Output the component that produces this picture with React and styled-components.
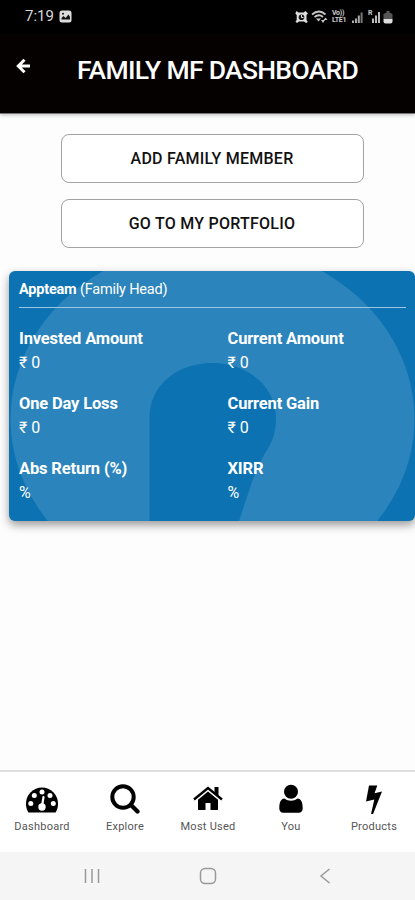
import React from 'react';
import styled, { createGlobalStyle } from 'styled-components';

const GlobalStyle = createGlobalStyle`
  * {
    box-sizing: border-box;
  }

  body {
    margin: 0;
    background: #fff;
    font-family: Roboto, 'Liberation Sans', sans-serif;
  }

  svg {
    display: block;
  }
`;

const Screen = styled.div`
  display: flex;
  flex-direction: column;
  width: 415px;
  height: 900px;
  background: #fdfdfd;
  overflow: hidden;
`;

const StatusBar = styled.div`
  display: flex;
  justify-content: space-between;
  align-items: center;
  height: 33px;
  padding: 0 30px 0 25px;
  background: #000;
  color: #d8d8d8;
`;

const Clock = styled.div`
  display: flex;
  align-items: center;
  gap: 5px;
  font-size: 15px;
  line-height: 33px;
`;

const Header = styled.header`
  display: flex;
  align-items: flex-start;
  height: 81px;
  padding: 22px 0 0 16px;
  background: #050100;
  border-bottom: 1px solid #777;
  box-shadow: 0 1px 4px rgba(0, 0, 0, 0.25);
  color: #fff;
`;

const BackButton = styled.div`
  width: 61px;
  padding-top: 3px;
`;

const Title = styled.h1`
  margin: 0;
  font-size: 26.5px;
  font-weight: 500;
  line-height: 30px;
  letter-spacing: -0.7px;
  white-space: nowrap;
`;

const Content = styled.main`
  flex: 1;
`;

const Actions = styled.div`
  display: flex;
  flex-direction: column;
  align-items: center;
  gap: 16px;
  padding: 20px 0 23px 9px;
`;

const ActionButton = styled.div`
  width: 303px;
  height: 49px;
  border: 1px solid #a2a2a2;
  border-radius: 8px;
  background: #fff;
  color: #111;
  font-size: 16px;
  font-weight: 500;
  line-height: 47px;
  text-align: center;
  letter-spacing: 0.25px;
`;

const Card = styled.section`
  position: relative;
  width: 406px;
  height: 250px;
  margin-left: 9px;
  padding: 0 9px 0 10px;
  border-radius: 6px;
  background: #0c72b2;
  box-shadow: 0 4px 10px rgba(0, 0, 0, 0.4);
  color: #fff;
  overflow: hidden;
`;

const Watermark = styled.svg`
  position: absolute;
  top: 0;
  left: 0;
`;

const CardBody = styled.div`
  position: relative;
`;

const Member = styled.div`
  height: 37px;
  border-bottom: 1px solid #9cc7e2;
  font-size: 14.5px;
  line-height: 37px;
  letter-spacing: -0.2px;

  b {
    font-weight: 700;
  }
`;

const Figures = styled.div`
  display: grid;
  grid-template-columns: 208.5px 1fr;
  grid-auto-rows: 65px;
  padding-top: 18px;
`;

const Label = styled.div`
  font-size: 16.5px;
  font-weight: 700;
  line-height: 25px;
  letter-spacing: -0.16px;
  white-space: nowrap;
`;

const Value = styled.div`
  font-size: 16px;
  line-height: 24px;
`;

const TabBar = styled.nav`
  display: grid;
  grid-template-columns: repeat(5, 83px);
  height: 82px;
  padding-left: 0.5px;
  border-top: 2px solid #dedede;
  background: #fff;
`;

const Tab = styled.div`
  display: flex;
  flex-direction: column;
  align-items: center;
  padding-top: 10px;
  color: #000;
`;

const TabLabel = styled.div`
  margin-top: 5px;
  color: #555;
  font-size: 11px;
  line-height: 16px;
  letter-spacing: 0.25px;
  white-space: nowrap;
`;

const SystemBar = styled.div`
  display: grid;
  grid-template-columns: 184px 48px 185px;
  align-items: center;
  height: 48px;
  background: #f5f5f5;

  svg {
    justify-self: center;
  }
`;

const figures = [
  { label: 'Invested Amount', value: '₹ 0' },
  { label: 'Current Amount', value: '₹ 0' },
  { label: 'One Day Loss', value: '₹ 0' },
  { label: 'Current Gain', value: '₹ 0' },
  { label: 'Abs Return (%)', value: '%' },
  { label: 'XIRR', value: '%' }
];

const DashboardIcon = () => (
  <svg width="34" height="32" viewBox="0 0 34 32">
    <path d="M3.500 30.500C2 28.300 1 25.500 1 22a16 16.500 0 0 1 32 0c0 3.500-1 6.300-2.500 8.500z" />
    <g fill="#fff">
      <circle cx="5.800" cy="21.500" r="2.500" />
      <circle cx="9.300" cy="13.500" r="2.500" />
      <circle cx="17" cy="10" r="2.500" />
      <circle cx="25" cy="13.500" r="2.500" />
      <circle cx="28.300" cy="21.500" r="2.500" />
      <circle cx="17" cy="25" r="3.700" />
    </g>
    <path d="M17.200 23l1.300-8" stroke="#fff" strokeWidth="2.200" strokeLinecap="round" />
  </svg>
);

const SearchIcon = () => (
  <svg width="34" height="32" viewBox="0 0 34 32" fill="none" stroke="#000">
    <circle cx="15" cy="15" r="10.700" strokeWidth="4" />
    <path d="M23 23l6.500 6.500" strokeWidth="4.300" strokeLinecap="round" />
  </svg>
);

const HomeIcon = () => (
  <svg width="34" height="32" viewBox="0 0 34 32">
    <path d="M3 17.500L17 6l14 11.500" fill="none" stroke="#000" strokeWidth="2.400" />
    <path d="M23.500 5h4v10l-4-3.500z" />
    <path d="M7 17.800L17 9.600l10 8.200V28h-7.500v-7h-5v7H7z" />
  </svg>
);

const UserIcon = () => (
  <svg width="34" height="32" viewBox="0 0 34 32">
    <path d="M10.500 16.500C6.800 17 5.300 20 5.300 26.500c0 2.500 1.500 4.200 4 4.200h15.400c2.500 0 4-1.700 4-4.200 0-6.500-1.500-9.500-5.200-10-2 1.600-4 2.200-6.500 2.200s-4.500-.6-6.500-2.200z" />
    <circle cx="17" cy="9.800" r="7" />
  </svg>
);

const BoltIcon = () => (
  <svg width="34" height="32" viewBox="0 0 34 32">
    <path d="M12 3.500h8.300l-2.800 7.700 7.500-1.700L16 32.200h-2L17.300 17.500 9 19.500z" />
  </svg>
);

const tabs = [
  { name: 'Dashboard', Icon: DashboardIcon },
  { name: 'Explore', Icon: SearchIcon },
  { name: 'Most Used', Icon: HomeIcon },
  { name: 'You', Icon: UserIcon },
  { name: 'Products', Icon: BoltIcon }
];

const GalleryIcon = () => (
  <svg width="13" height="13" viewBox="0 0 13 13">
    <rect x="0.500" y="0.500" width="12" height="12" rx="2.500" fill="#ddd" />
    <path d="M2.500 9.500V8l2-2 2 2 3-3.500L11 7v2.500z" fill="#111" />
    <circle cx="4" cy="3.700" r="1" fill="#111" />
  </svg>
);

const NetworkLabel = styled.div`
  display: flex;
  flex-direction: column;
  width: 15px;
  margin: 0 3px;
  color: #ccc;
  font-size: 7px;
  font-weight: 700;
  line-height: 7px;
  letter-spacing: -0.3px;
`;

const AlarmIcon = () => (
  <svg width="15" height="16" viewBox="0 0 15 16">
    <path
      d="M2.500 2l2 1.500h5L11.500 2 14 4.500 12.500 6v5l1.300 2-1.800 1-2-1.500H5L3 14l-1.500-1.500L2.700 11V6L1.300 4.500z"
      fill="#ddd"
    />
    <circle cx="7.500" cy="8.300" r="2.800" fill="#151515" />
    <path d="M7.500 6v2.500h2" stroke="#ddd" fill="none" />
  </svg>
);

const WifiIcon = () => (
  <svg width="17" height="16" viewBox="0 0 17 16" fill="#c8c8c8">
    <path d="M1 5.500q7-6 13.500 0M3.500 8q4.500-3.500 8.500 0" fill="none" stroke="#c8c8c8" strokeWidth="1.800" />
    <path d="M5 9.500h5L7.500 12.500z" />
    <path d="M10 11h4l-2 3zM12.500 11l2-2.500 2 2.500z" />
  </svg>
);

const SignalIcon = () => (
  <svg width="11" height="16" viewBox="0 0 11 16" fill="#aaa">
    <path d="M0 11.500h2V14H0zM3 9.500h2V14H3zM5.800 6.500h2V14h-2z" />
    <path d="M8.600 3.500h2V14h-2z" fill="#777" />
  </svg>
);

const RoamingSignal = styled.div`
  display: flex;
  align-items: flex-start;
  margin-left: 4px;
  color: #ccc;
  font-size: 7px;
  font-weight: 700;
  line-height: 8px;
`;

const BatteryIcon = () => (
  <svg width="10" height="16" viewBox="0 0 10 16">
    <path d="M3.500 2h3v1.500L9.500 5v5h-9V5l3-1.500z" fill="#555" />
    <path d="M.500 10h9v2.500q0 2-2 2h-5q-2 0-2-2z" fill="#ddd" />
  </svg>
);

const StatusRight = styled.div`
  display: flex;
  align-items: center;
  justify-content: space-between;
  width: 99px;
  margin-right: -8px;

  svg {
    flex: none;
  }
`;

const App = () => {
  return (
    <Screen>
      <GlobalStyle />
      <StatusBar>
        <Clock>
          7:19
          <GalleryIcon />
        </Clock>
        <StatusRight>
          <AlarmIcon />
          <WifiIcon />
          <NetworkLabel>
            <span>Vo))</span>
            <span>LTE1</span>
          </NetworkLabel>
          <SignalIcon />
          <RoamingSignal>
            R
            <svg width="9" height="16" viewBox="0 0 9 16" fill="#bbb">
              <path d="M0 9.500h2V14H0zM3 6.500h2V14H3zM6 3h2v11H6z" />
            </svg>
          </RoamingSignal>
          <BatteryIcon />
        </StatusRight>
      </StatusBar>
      <Header>
        <BackButton>
          <svg width="15" height="16" viewBox="0 0 15 16" fill="none" stroke="#fff" strokeWidth="3">
            <path d="M8.500 1.800L2.300 8l6.200 6.200M3 8h11" />
          </svg>
        </BackButton>
        <Title>FAMILY MF DASHBOARD</Title>
      </Header>
      <Content>
        <Actions>
          <ActionButton>ADD FAMILY MEMBER</ActionButton>
          <ActionButton>GO TO MY PORTFOLIO</ActionButton>
        </Actions>
        <Card>
          <Watermark width="406" height="250" viewBox="0 0 406 250">
            <ellipse cx="203.500" cy="148" rx="202" ry="176" fill="#2b84bb" />
            <path
              d="M140.500 250V147C140.500 114 168 92 203.500 92S267 116 267 147C267 162 263 172 256 182Q247 198 241 217L230 250z"
              fill="#0c72b2"
            />
          </Watermark>
          <CardBody>
            <Member>
              <b>Appteam</b> (Family Head)
            </Member>
            <Figures>
              {figures.map(item => (
                <div key={item.label}>
                  <Label>{item.label}</Label>
                  <Value>{item.value}</Value>
                </div>
              ))}
            </Figures>
          </CardBody>
        </Card>
      </Content>
      <TabBar>
        {tabs.map(({ name, Icon }) => (
          <Tab key={name}>
            <Icon />
            <TabLabel>{name}</TabLabel>
          </Tab>
        ))}
      </TabBar>
      <SystemBar>
        <svg width="16" height="16" viewBox="0 0 16 16" stroke="#999" strokeWidth="1.500">
          <path d="M1.500 1v14M8 1v14M14.500 1v14" />
        </svg>
        <svg width="18" height="18" viewBox="0 0 18 18" fill="none" stroke="#999" strokeWidth="1.500">
          <rect x="1.500" y="1.500" width="15" height="15" rx="4.500" />
        </svg>
        <svg width="12" height="16" viewBox="0 0 12 16" fill="none" stroke="#999" strokeWidth="1.500">
          <path d="M10.500 1L2 8l8.500 7" />
        </svg>
      </SystemBar>
    </Screen>
  );
};

export default App;
